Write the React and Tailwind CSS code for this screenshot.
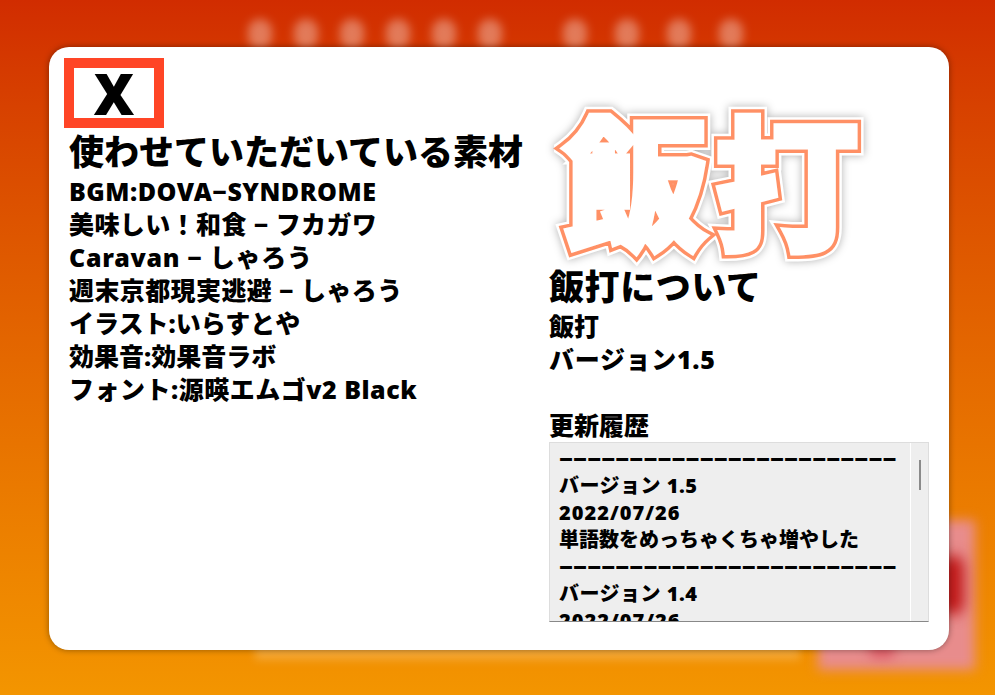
const font = "font-['Noto_Sans','Noto_Sans_CJK_JP',sans-serif]";

const credits = [
  { text: "BGM:DOVA−SYNDROME", cls: "tracking-[0.5px]" },
  { text: "美味しい！和食 − フカガワ", cls: "tracking-[0.4px]" },
  { text: "Caravan − しゃろう", cls: "tracking-[0.7px]" },
  { text: "週末京都現実逃避 − しゃろう", cls: "tracking-[0.4px]" },
  { text: "イラスト:いらすとや", cls: "" },
  { text: "効果音:効果音ラボ", cls: "" },
  { text: "フォント:源暎エムゴv2 Black", cls: "tracking-[0.5px]" },
];

const rule = "−−−−−−−−−−−−−−−−−−−−−−−−";

const history = [
  { text: rule, cls: "text-[24px]" },
  { text: "バージョン 1.5", cls: "text-[20px] tracking-[0.5px]" },
  { text: "2022/07/26", cls: "text-[20px] tracking-[1px]" },
  { text: "単語数をめっちゃくちゃ増やした", cls: "text-[20px]" },
  { text: rule, cls: "text-[24px]" },
  { text: "バージョン 1.4", cls: "text-[20px] tracking-[0.5px]" },
  { text: "2022/07/26", cls: "text-[20px] tracking-[1px]" },
];

function Blob() {
  return <div className="w-[24px] h-[30px] rounded-full bg-white/35 blur-[5px]" />;
}

function Backdrop() {
  return (
    <div className="absolute inset-0 overflow-hidden">
      <div className="absolute left-[248px] top-[19px] flex">
        <div className="flex gap-[22px]">
          {[0, 1, 2, 3, 4, 5].map((i) => <Blob key={i} />)}
        </div>
        <div className="flex gap-[28px] ml-[61px]">
          {[0, 1, 2, 3].map((i) => <Blob key={i} />)}
        </div>
      </div>
      <div className="absolute left-[255px] top-[640px] w-[545px] h-[20px] bg-white/20 blur-[4px]" />
      <div className="absolute left-[818px] top-[520px] w-[157px] h-[150px] bg-[#e88c8c] blur-[6px]" />
      <div className="absolute left-[940px] top-[555px] w-[24px] h-[60px] rounded-full bg-[#c01818] blur-[7px]" />
      <div className="absolute left-[868px] top-[640px] w-[28px] h-[18px] rounded-full bg-[#dc5a64] blur-[6px]" />
    </div>
  );
}

export default function App() {
  return (
    <div className={`relative w-[995px] h-[695px] overflow-hidden bg-gradient-to-b from-[#d12c00] to-[#f39500] text-black font-black pl-[49px] pt-[47px] ${font}`}>
      <Backdrop />
      <div className="relative w-[900px] h-[603px] bg-white rounded-[20px] shadow-[0_0_6px_rgba(0,0,0,0.4)] flex">
        <div className="w-[500px] pl-[15px] pt-[11px]">
          <button className="block w-[100px] h-[70px] border-[10px] border-[#ff4526] bg-white text-[56px] leading-[50px] font-black text-black">
            X
          </button>
          <div className="pl-[5px] pt-[1px]">
            <h2 className="text-[35px] leading-[46px] font-black whitespace-nowrap">使わせていただいている素材</h2>
            {credits.map((c) => (
              <p key={c.text} className={`text-[25px] leading-[33px] whitespace-nowrap ${c.cls}`}>{c.text}</p>
            ))}
          </div>
        </div>
        <div className="flex-1 pt-[37px]">
          <div className="relative isolate h-[180px] w-[320px] text-[145px] leading-[200px] tracking-[6px] font-black text-white whitespace-nowrap pl-[14px] [-webkit-text-stroke:5px_#ffffff] before:content-['飯打'] before:absolute before:left-[14px] before:top-0 before:-z-10 before:[-webkit-text-stroke:12px_#ff9065] after:content-['飯打'] after:absolute after:left-[14px] after:top-0 after:-z-20 after:[-webkit-text-stroke:17px_#ffffff] after:[filter:drop-shadow(0_0_4px_rgba(0,0,0,0.3))]">
            飯打
          </div>
          <h2 className="text-[35px] leading-[46px] font-black whitespace-nowrap tracking-[0.6px]">飯打について</h2>
          <p className="text-[25px] leading-[33px]">飯打</p>
          <p className="text-[25px] leading-[33px] tracking-[0.7px]">バージョン1.5</p>
          <p className="text-[25px] leading-[33px] mt-[33px]">更新履歴</p>
          <div className="w-[380px] h-[180px] bg-[#eeeeee] border border-[#dddddd] border-b-[#888888] flex overflow-hidden">
            <div className="flex-1 pl-[9px] pt-[2px] overflow-hidden">
              {history.map((line, i) => (
                <p key={i} className={`leading-[27px] whitespace-nowrap ${line.cls}`}>{line.text}</p>
              ))}
            </div>
            <div className="w-[18px] border-l border-white flex justify-center pt-[17px]">
              <div className="w-[2px] h-[30px] bg-[#8a8a8a]" />
            </div>
          </div>
        </div>
      </div>
    </div>
  );
}
